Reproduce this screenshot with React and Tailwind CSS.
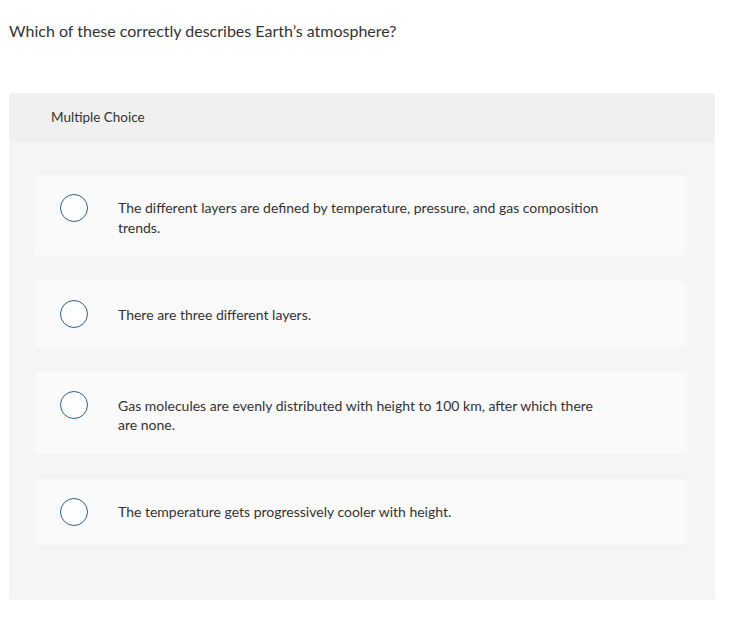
const options = [
  'The different layers are defined by temperature, pressure, and gas composition trends.',
  'There are three different layers.',
  'Gas molecules are evenly distributed with height to 100 km, after which there are none.',
  'The temperature gets progressively cooler with height.',
];

function Option({ text }) {
  return (
    <label className="flex items-start gap-[30px] rounded-[3px] bg-[#fafafa] py-[19px] pl-[25px] pr-[40px]">
      <span className="h-[28px] w-[28px] shrink-0 rounded-full border-[1.5px] border-[#2c5f8a] bg-white" />
      <span className="mt-[4.25px] max-w-[492px] text-[14px] leading-[19.5px] text-[#333]">{text}</span>
    </label>
  );
}

export default function App() {
  return (
    <div className="min-h-[632px] bg-white pt-[21px] font-['Lato',sans-serif] text-[#333]">
      <p className="pl-[9px] text-[16px] leading-[20px]">Which of these correctly describes Earth’s atmosphere?</p>
      <section className="ml-[9px] mt-[52px] w-[706px] overflow-hidden rounded-[3px] bg-[#f5f5f5]">
        <div className="flex h-[49px] items-center bg-[#f0f0f0] pl-[42px] text-[13.5px]">Multiple Choice</div>
        <div className="flex flex-col gap-[25px] pb-[55px] pl-[26px] pr-[28px] pt-[33px]">
          {options.map((t) => (
            <Option key={t} text={t} />
          ))}
        </div>
      </section>
    </div>
  );
}
